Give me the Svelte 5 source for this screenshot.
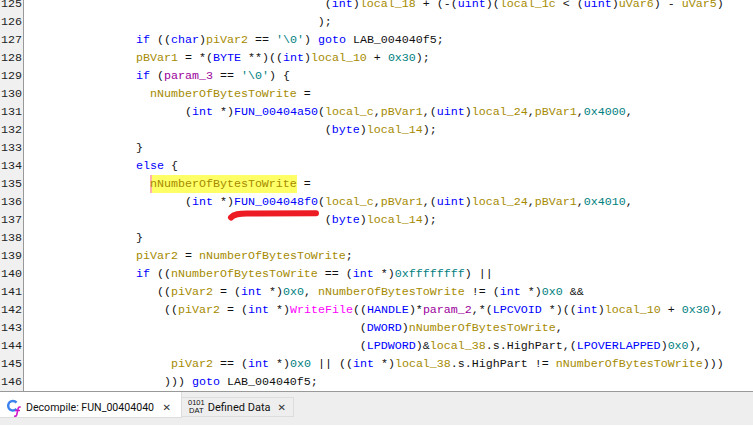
<script>
    // ~x:text~ marks a coloured token, x is the token class
    const source = [
        [125, 35, "(~t:int~)~v:local_18~ + (-(~t:uint~)(~v:local_1c~ < (~t:uint~)~v:uVar6~) - ~v:uVar5~)"],
        [126, 34, ");"],
        [127, 8, "~k:if~ ((~t:char~)~v:piVar2~ == ~c:'\\0'~) ~k:goto~ LAB_004040f5;"],
        [128, 8, "~v:pBVar1~ = *(~t:BYTE~ **)((~t:int~)~v:local_10~ + ~c:0x30~);"],
        [129, 8, "~k:if~ (~p:param_3~ == ~c:'\\0'~) {"],
        [130, 10, "~v:nNumberOfBytesToWrite~ ="],
        [131, 15, "(~t:int~ *)~f:FUN_00404a50~(~v:local_c~,~v:pBVar1~,(~t:uint~)~v:local_24~,~v:pBVar1~,~c:0x4000~,"],
        [132, 35, "(~t:byte~)~v:local_14~);"],
        [133, 8, "}"],
        [134, 8, "~k:else~ {"],
        [135, 10, "~h:nNumberOfBytesToWrite~ ="],
        [136, 15, "(~t:int~ *)~f:FUN_004048f0~(~v:local_c~,~v:pBVar1~,(~t:uint~)~v:local_24~,~v:pBVar1~,~c:0x4010~,"],
        [137, 35, "(~t:byte~)~v:local_14~);"],
        [138, 8, "}"],
        [139, 8, "~v:piVar2~ = ~v:nNumberOfBytesToWrite~;"],
        [140, 8, "~k:if~ ((~v:nNumberOfBytesToWrite~ == (~t:int~ *)~c:0xffffffff~) ||"],
        [141, 11, "((~v:piVar2~ = (~t:int~ *)~c:0x0~, ~v:nNumberOfBytesToWrite~ != (~t:int~ *)~c:0x0~ &&"],
        [142, 12, "((~v:piVar2~ = (~t:int~ *)~w:WriteFile~((~t:HANDLE~)*~p:param_2~,*(~t:LPCVOID~ *)((~t:int~)~v:local_10~ + ~c:0x30~),"],
        [143, 40, "(~t:DWORD~)~v:nNumberOfBytesToWrite~,"],
        [144, 40, "(~t:LPDWORD~)&~v:local_38~.s.HighPart,(~t:LPOVERLAPPED~)~c:0x0~),"],
        [145, 13, "~v:piVar2~ == (~t:int~ *)~c:0x0~ || ((~t:int~ *)~v:local_38~.s.HighPart != ~v:nNumberOfBytesToWrite~)))"],
        [146, 12, "))) ~k:goto~ LAB_004040f5;"]
    ];

    function tokens(text) {
        return text.split("~").map((part, i) =>
            i % 2 ? { cls: part[0], text: part.slice(2) } : { cls: "", text: part }
        );
    }

    const lines = source.map(([num, indent, text]) => ({
        num,
        pad: " ".repeat(indent),
        parts: tokens(text)
    }));
</script>

<div class="window">
    <div class="editor">
        <div class="gutter">
            {#each lines as line}
                <div class="num">{line.num}</div>
            {/each}
        </div>
        <div class="code">
            {#each lines as line}
                <div class="line">{line.pad}{#each line.parts as part}<span class={part.cls}>{part.text}</span>{/each}</div>
            {/each}
        </div>
        <svg class="scribble" width="100" height="14" viewBox="0 0 100 14">
            <path d="M4 10.500C7 7 12 6.500 20 6.500L89 6.200" fill="none" stroke="#ed1c24" stroke-width="6" stroke-linecap="round" />
        </svg>
    </div>

    <div class="tabs">
        <div class="tab active">
            <svg class="icon" width="16" height="18" viewBox="0 0 16 18">
                <path d="M10.500 3.600C9.500 2.400 8.300 2 6.900 2 4.100 2 2.200 4 2.200 6.700s1.900 4.700 4.700 4.700c1.400 0 2.600-.5 3.600-1.600" fill="none" stroke="#3b82f0" stroke-width="2.500" />
                <path d="M14.700 8.200c-1.300-.5-2.300 0-2.600 1.400l-1.300 6c-.3 1.300-1.200 1.800-2.600 1.400M9 11.500h5" fill="none" stroke="#d016c8" stroke-width="1.600" />
            </svg>
            <span class="label">Decompile: FUN_00404040</span>
            <span class="close">✕</span>
        </div>
        <div class="tab">
            <span class="dat">0101<br />DAT</span>
            <span class="label">Defined Data</span>
            <span class="close">✕</span>
        </div>
    </div>
</div>

<style>
    :global(body) {
        background: #fff;
    }
    .window {
        width: 753px;
        height: 426px;
        display: flex;
        flex-direction: column;
        overflow: hidden;
    }
    .editor {
        position: relative;
        display: flex;
        height: 391px;
        flex: none;
        overflow: hidden;
        border-bottom: 1px solid #999;
        font-family: "Liberation Mono", monospace;
        font-size: 11.67px;
        line-height: 18px;
    }
    .gutter {
        width: 23px;
        flex: none;
        background: #f0f0f0;
        border-right: 1px solid #999;
        margin-top: -5px;
        color: #222;
    }
    .num {
        padding-left: 1px;
        white-space: pre;
    }
    .code {
        flex: 1;
        margin-top: -5px;
        padding-left: 56px;
        color: #111;
    }
    .line {
        height: 18px;
        white-space: pre;
    }
    .t, .k, .f { color: #0000ff; }
    .v { color: #a58a00; }
    .c { color: #008080; }
    .p { color: #9b009b; }
    .w { color: #ff00ff; }
    .h {
        display: inline-block;
        color: #a58a00;
        background: #ffff66;
        box-shadow: inset 2px 0 #ffb0b0;
    }
    .scribble {
        position: absolute;
        left: 227px;
        top: 207px;
    }
    .tabs {
        height: 33px;
        flex: none;
        display: flex;
        align-items: flex-start;
        background: #eeeeee;
        font-family: Roboto, sans-serif;
        font-size: 11px;
        color: #111;
    }
    .tab {
        display: flex;
        align-items: center;
        height: 20px;
        margin-top: 5px;
        width: 112px;
        box-sizing: border-box;
        padding-left: 6px;
        border: 1px solid #ddd;
        border-left: none;
    }
    .tab.active {
        width: 182px;
        height: 26px;
        margin-top: 0;
        padding: 6px 0 0 6px;
        font-size: 10.6px;
        background: #fff;
        border: none;
        border-right: 1px solid #ddd;
        border-bottom: 1px solid #ddd;
    }
    .label {
        white-space: nowrap;
        flex: none;
    }
    .icon {
        flex: none;
        margin-right: 4px;
    }
    .dat {
        flex: none;
        font-family: "Liberation Sans", sans-serif;
        font-size: 7.5px;
        line-height: 8px;
        text-align: center;
        margin-right: 3px;
    }
    .close {
        margin-left: auto;
        margin-right: 7px;
        font-family: "DejaVu Sans", sans-serif;
        font-size: 10px;
        font-weight: bold;
        color: #333;
    }
    .active .close {
        margin-right: 10px;
    }
</style>
